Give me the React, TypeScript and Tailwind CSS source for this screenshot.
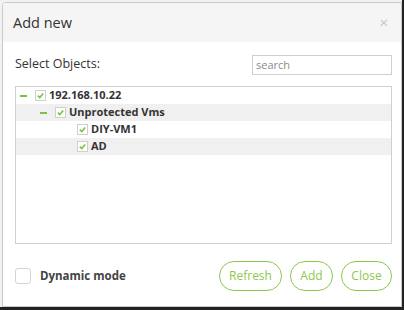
import React from "react";

const green = "#7dc142";

function Check() {
  return (
    <span className="w-[11px] h-[11px] border border-[#cfcfcf] bg-white flex items-center justify-center shrink-0">
      <svg width="9" height="9" viewBox="0 0 10 10">
        <path d="M2 5.2 L4.2 7.2 L8 2.8" fill="none" stroke={green} strokeWidth="1.8" />
      </svg>
    </span>
  );
}

function Dash() {
  return <span className="w-[7px] h-[2px] bg-[#7dc142] shrink-0" />;
}

type Row = { label: string; indent: number; dash: boolean; shaded: boolean };

const rows: Row[] = [
  { label: "192.168.10.22", indent: 4, dash: true, shaded: false },
  { label: "Unprotected Vms", indent: 24, dash: true, shaded: true },
  { label: "DIY-VM1", indent: 61, dash: false, shaded: false },
  { label: "AD", indent: 61, dash: false, shaded: true },
];

export default function App() {
  return (
    <div
      className="w-[404px] h-[310px] flex flex-col bg-[#222] overflow-hidden"
      style={{ fontFamily: '"Open Sans", "Liberation Sans", sans-serif' }}
    >
      <div className="flex flex-1">
        <div className="flex-1 bg-[#f2f2f2] pl-[2px] pt-[2px]">
          <div className="h-full bg-white border border-[#c9c9c9] rounded-tl-[4px] flex flex-col overflow-hidden">
            {/* header */}
            <div className="h-[39px] bg-[#f5f5f5] flex items-center justify-between pl-[10px] pr-[13px]">
              <span className="text-[14.5px] text-[#333]">Add new</span>
              <span className="text-[15px] text-[#c4c4c4] leading-none">×</span>
            </div>

            {/* body */}
            <div className="pl-[12px] pr-[9px] pt-[12px] flex flex-col">
              <div className="flex items-center justify-between h-[21px]">
                <span className="text-[12.5px] text-[#333]">Select Objects:</span>
                <input
                  placeholder="search"
                  className="w-[140px] h-[20px] border border-[#cfcfcf] px-[3px] text-[11px] text-[#555] placeholder-[#8a8a8a] outline-none"
                />
              </div>

              <div className="mt-[11px] h-[158px] border border-[#cfcfcf] flex flex-col">
                {rows.map((r) => (
                  <div
                    key={r.label}
                    className={`h-[17px] flex items-center ${r.shaded ? "bg-[#f0f0f0]" : ""}`}
                    style={{ paddingLeft: r.indent }}
                  >
                    {r.dash && <Dash />}
                    <span className={r.dash ? "ml-[8px]" : ""}>
                      <Check />
                    </span>
                    <span className="ml-[3px] text-[11px] font-bold text-[#333]">{r.label}</span>
                  </div>
                ))}
              </div>

              {/* footer */}
              <div className="mt-[17px] flex items-center justify-between">
                <div className="flex items-center">
                  <span className="w-[16px] h-[16px] border border-[#d4d4d4] rounded-[3px] bg-white" />
                  <span className="ml-[9px] text-[11.5px] font-bold text-[#444]">Dynamic mode</span>
                </div>
                <div className="flex items-center gap-[8px]">
                  <button className="h-[30px] w-[63px] rounded-full border border-[#8cc84b] text-[12px] text-[#8cc84b] bg-white">
                    Refresh
                  </button>
                  <button className="h-[30px] w-[43px] rounded-full border border-[#8cc84b] text-[12px] text-[#8cc84b] bg-white">
                    Add
                  </button>
                  <button className="h-[30px] w-[51px] rounded-full border border-[#8cc84b] text-[12px] text-[#8cc84b] bg-white">
                    Close
                  </button>
                </div>
              </div>
            </div>
          </div>
        </div>
        <div className="w-[2px]" />
      </div>
      <div className="h-[3px]" />
    </div>
  );
}
